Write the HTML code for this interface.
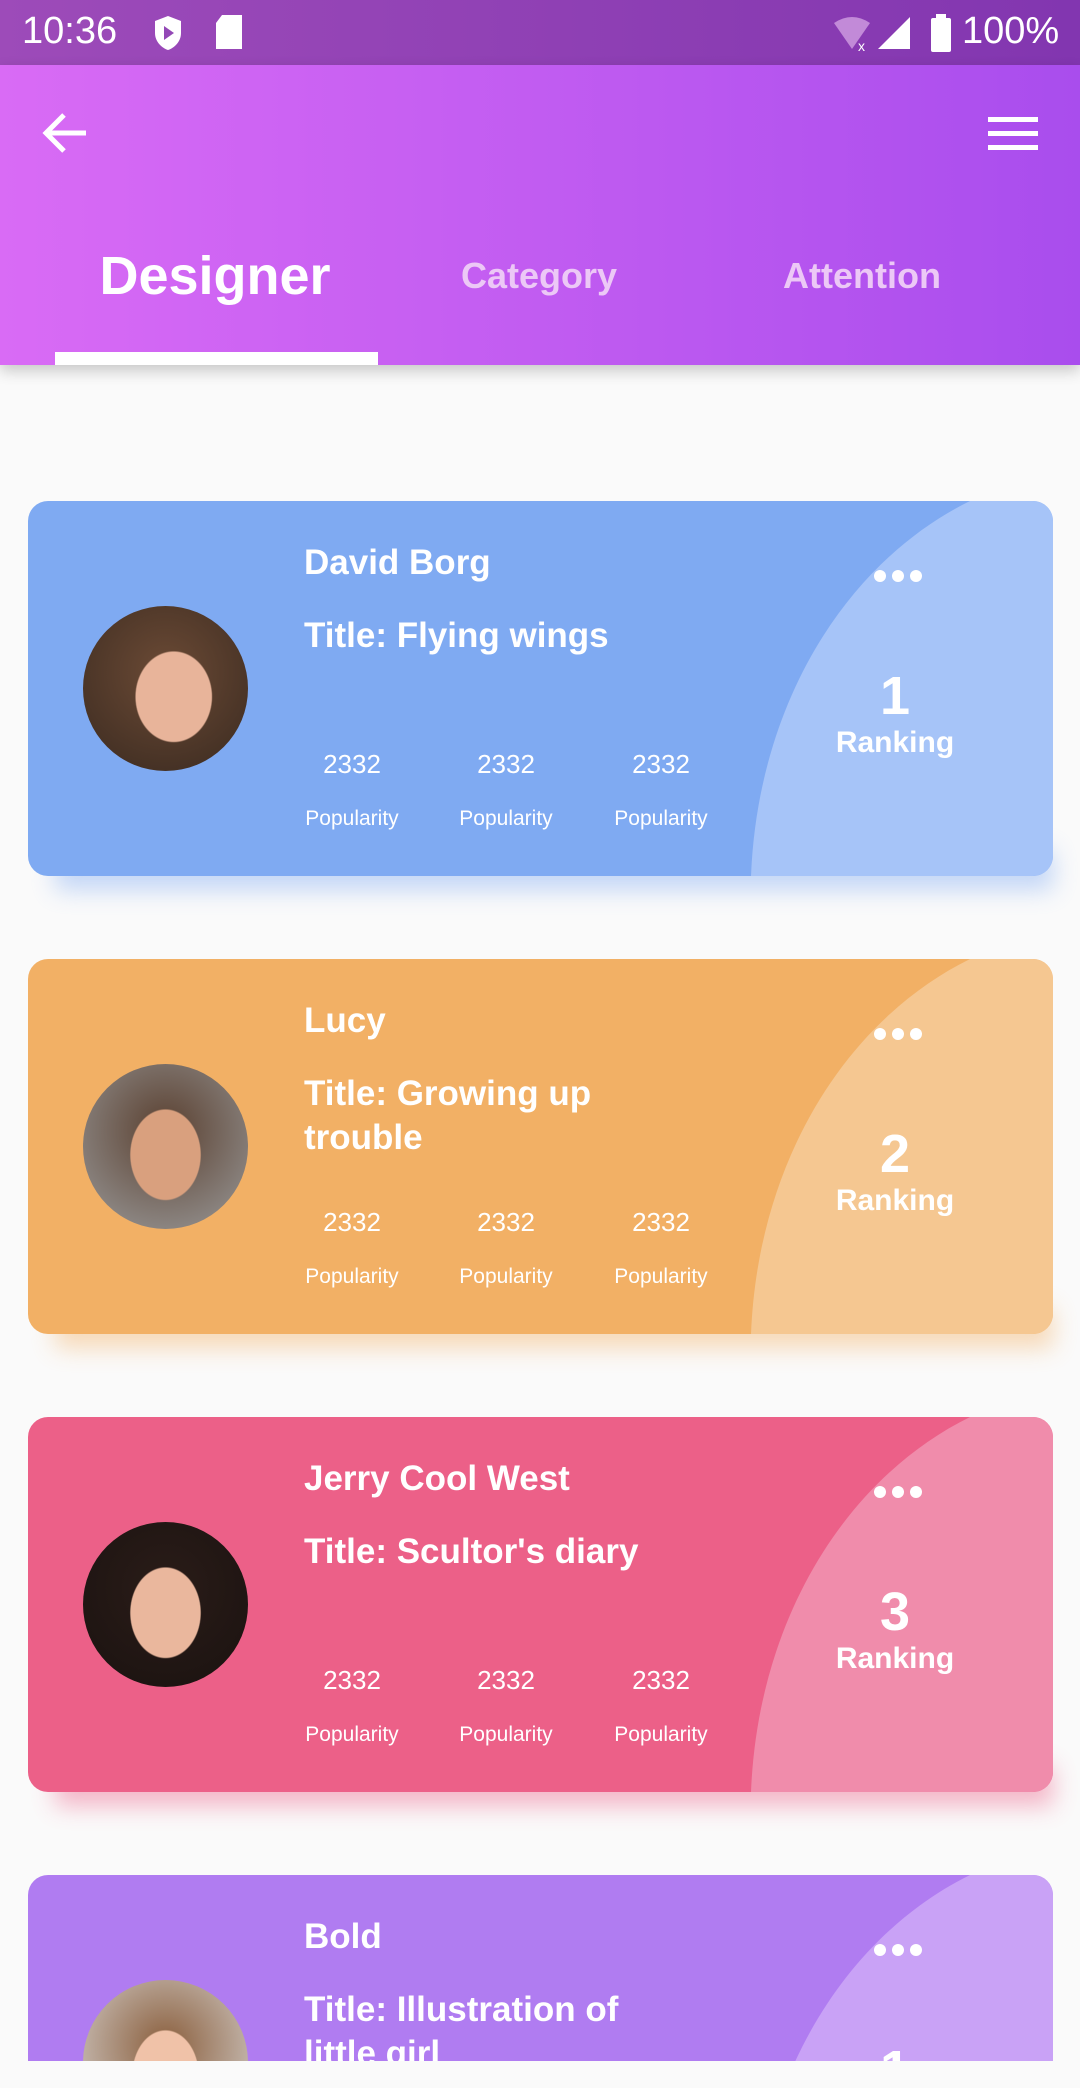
<!DOCTYPE html>
<html><head><meta charset="utf-8"><style>
*{margin:0;padding:0;box-sizing:border-box}
html,body{width:1080px;height:2088px;overflow:hidden}
body{background:#fafafa;font-family:"Liberation Sans",Roboto,sans-serif;position:relative}
.sb{position:absolute;left:0;top:0;width:1080px;height:65px;background:linear-gradient(90deg,#9d4bb9,#8236b0);color:#fff}
.hd{position:absolute;left:0;top:65px;width:1080px;height:300px;background:linear-gradient(90deg,#d96bf5,#a94ded);box-shadow:0 6px 14px rgba(0,0,0,.2)}
.tab{position:absolute;top:276px;transform:translate(-50%,-50%);color:#ecc8f6;font-weight:bold;font-size:36px;white-space:nowrap}
.card{position:absolute;left:28px;width:1025px;height:375px;border-radius:20px;overflow:hidden;color:#fff}
.sh{position:absolute;left:55px;width:998px;height:40px;filter:blur(12px);opacity:.45}
.card svg{position:absolute;left:0;top:0}
.av{position:absolute;left:55px;top:105px;width:165px;height:165px;border-radius:50%;overflow:hidden}
.nm{position:absolute;left:276px;top:42px;font-size:35px;font-weight:bold}
.tt{position:absolute;left:276px;top:113px;font-size:35px;font-weight:bold;line-height:44px;width:360px}
.num{position:absolute;top:248px;width:120px;text-align:center;font-size:26px}
.lb{position:absolute;top:306px;width:140px;text-align:center;font-size:21px}
.dots{position:absolute;left:846px;top:69px;width:48px;height:12px}
.dots i{position:absolute;top:0;width:12px;height:12px;border-radius:50%;background:#fff}
.rk{position:absolute;left:787px;width:160px;text-align:center;font-weight:bold}
</style></head><body>
<div class="sb">
<div style="position:absolute;left:22px;top:10px;font-size:38px">10:36</div>
<svg style="position:absolute;left:152px;top:14px" width="32" height="38" viewBox="0 0 32 38"><path d="M16 2 L29 7 V19 C29 28 22 34 16 36 C10 34 3 28 3 19 V7 Z" fill="#fff"/><path d="M12 12 L22 19 L12 26Z" fill="#9348b6"/></svg>
<svg style="position:absolute;left:214px;top:15px" width="30" height="36"><path d="M8 0 H28 V34 H2 V8 Z" fill="#fff"/></svg>
<svg style="position:absolute;left:830px;top:15px" width="44" height="38"><path d="M4 8 Q22 -4 40 8 L22 34 Z" fill="#c28ad8"/><text x="28" y="36" font-size="14" fill="#fff" font-family="Liberation Sans">x</text></svg>
<svg style="position:absolute;left:876px;top:15px" width="36" height="36"><path d="M34 2 V34 H2 Z" fill="#fff"/></svg>
<svg style="position:absolute;left:930px;top:14px" width="22" height="38"><rect x="6" y="0" width="10" height="4" fill="#fff"/><rect x="1" y="4" width="20" height="34" rx="2" fill="#fff"/></svg>
<div style="position:absolute;left:962px;top:10px;font-size:38px">100%</div>
</div>
<div class="hd">
<svg style="position:absolute;left:42px;top:46px" width="48" height="44" viewBox="0 0 48 44"><path d="M44 22 H6 M22 4 L4 22 L22 40" stroke="#fff" stroke-width="5" fill="none"/></svg>
<div style="position:absolute;left:988px;top:52px;width:50px;height:5px;background:#fff"></div>
<div style="position:absolute;left:988px;top:66px;width:50px;height:5px;background:#fff"></div>
<div style="position:absolute;left:988px;top:80px;width:50px;height:5px;background:#fff"></div>
<div style="position:absolute;left:55px;top:287px;width:323px;height:13px;background:#fff"></div>
</div>
<div class="tab" style="left:215px;color:#fff;font-size:54px">Designer</div>
<div class="tab" style="left:539px">Category</div>
<div class="tab" style="left:862px">Attention</div>

<div class="sh" style="top:850px;background:#7faaf2"></div>
<div class="card" style="top:501px;background:#7faaf2">
<svg width="1025" height="375"><path d="M942 0 C820 60 730 200 723 375 L1025 375 L1025 0Z" fill="#a6c4f8"/></svg>
<div class="av" style="background:radial-gradient(ellipse 38% 45% at 55% 55%,#e8b49a 60%,transparent 62%),radial-gradient(circle at 50% 40%,#6b4a35,#3a2a20)"></div>
<div class="nm">David Borg</div><div class="tt">Title: Flying wings</div>
<div class="num" style="left:264px">2332</div><div class="num" style="left:418px">2332</div><div class="num" style="left:573px">2332</div>
<div class="lb" style="left:254px">Popularity</div><div class="lb" style="left:408px">Popularity</div><div class="lb" style="left:563px">Popularity</div>
<div class="dots"><i style="left:0"></i><i style="left:18px"></i><i style="left:36px"></i></div>
<div class="rk" style="top:164px;font-size:54px">1</div><div class="rk" style="top:225px;font-size:30px">Ranking</div>
</div>

<div class="sh" style="top:1308px;background:#f2b065"></div>
<div class="card" style="top:959px;background:#f2b065">
<svg width="1025" height="375"><path d="M942 0 C820 60 730 200 723 375 L1025 375 L1025 0Z" fill="#f5c791"/></svg>
<div class="av" style="background:radial-gradient(ellipse 35% 45% at 50% 55%,#d9a07e 60%,transparent 62%),radial-gradient(circle at 50% 40%,#5a4030,#9a9a9a)"></div>
<div class="nm">Lucy</div><div class="tt">Title: Growing up trouble</div>
<div class="num" style="left:264px">2332</div><div class="num" style="left:418px">2332</div><div class="num" style="left:573px">2332</div>
<div class="lb" style="left:254px">Popularity</div><div class="lb" style="left:408px">Popularity</div><div class="lb" style="left:563px">Popularity</div>
<div class="dots"><i style="left:0"></i><i style="left:18px"></i><i style="left:36px"></i></div>
<div class="rk" style="top:164px;font-size:54px">2</div><div class="rk" style="top:225px;font-size:30px">Ranking</div>
</div>

<div class="sh" style="top:1766px;background:#ec6088"></div>
<div class="card" style="top:1417px;background:#ec6088">
<svg width="1025" height="375"><path d="M942 0 C820 60 730 200 723 375 L1025 375 L1025 0Z" fill="#f08cab"/></svg>
<div class="av" style="background:radial-gradient(ellipse 35% 45% at 50% 55%,#eab79d 60%,transparent 62%),radial-gradient(circle at 50% 40%,#2a1c18,#1a1210)"></div>
<div class="nm">Jerry Cool West</div><div class="tt">Title: Scultor's diary</div>
<div class="num" style="left:264px">2332</div><div class="num" style="left:418px">2332</div><div class="num" style="left:573px">2332</div>
<div class="lb" style="left:254px">Popularity</div><div class="lb" style="left:408px">Popularity</div><div class="lb" style="left:563px">Popularity</div>
<div class="dots"><i style="left:0"></i><i style="left:18px"></i><i style="left:36px"></i></div>
<div class="rk" style="top:164px;font-size:54px">3</div><div class="rk" style="top:225px;font-size:30px">Ranking</div>
</div>

<div style="position:absolute;left:0;top:1875px;width:1080px;height:186px;overflow:hidden">
<div class="card" style="top:0;background:#b07cf1;border-bottom-left-radius:0;border-bottom-right-radius:0;height:375px">
<svg width="1025" height="375"><path d="M942 0 C820 60 730 200 723 375 L1025 375 L1025 0Z" fill="#c9a2f6"/></svg>
<div class="av" style="background:radial-gradient(ellipse 33% 45% at 50% 58%,#f0c2a8 60%,transparent 62%),radial-gradient(circle at 50% 40%,#8a5e3c,#dcdcdc)"></div>
<div class="nm">Bold</div><div class="tt">Title: Illustration of little girl</div>
<div class="dots"><i style="left:0"></i><i style="left:18px"></i><i style="left:36px"></i></div>
<div class="rk" style="top:164px;font-size:54px">1</div>
</div>
</div>
</body></html>
